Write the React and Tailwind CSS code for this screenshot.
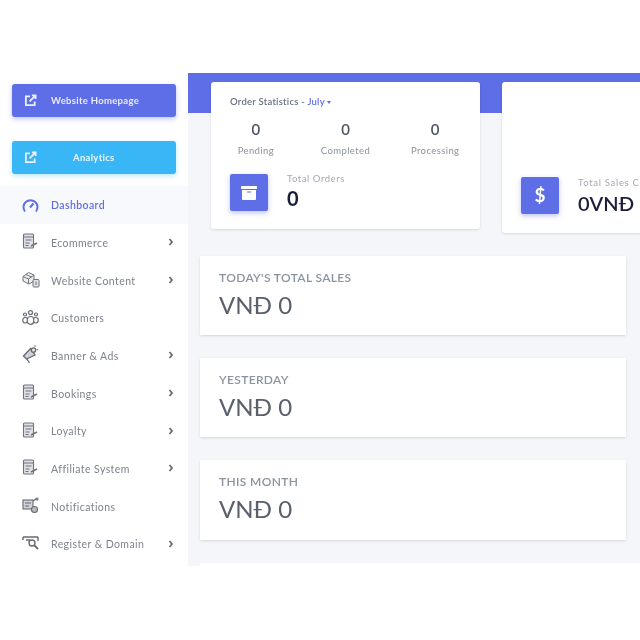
import React from "react";

const Doc = () => (
  <svg width="17" height="17" viewBox="0 0 17 17" fill="none" stroke="#6f747c" strokeWidth="1.1">
    <rect x="1.5" y="1" width="10" height="14" rx="1" fill="#dfe1e5" />
    <path d="M1.500 4h10M3.500 7h6M3.500 10h4M3.500 12.500h3" />
    <path d="M9 13l6-3" strokeWidth="1.600" />
  </svg>
);
const Box = () => (
  <svg width="18" height="17" viewBox="0 0 18 17" fill="none" stroke="#6f747c" strokeWidth="1">
    <path d="M1 5.500l5.500-4 5.500 2.500v6l-5 3-6-3z" fill="#eceef0" />
    <path d="M6.500 8v5M1 5.500l5.500 2.500 5.500-4M4 3.500l5.500 2.500" />
    <rect x="11" y="8.500" width="6" height="7.500" rx="1" fill="#dfe1e5" />
    <path d="M14 10.500v3.500" />
  </svg>
);
const People = () => (
  <svg width="17" height="15" viewBox="0 0 17 15" fill="none" stroke="#666b73" strokeWidth="1.200">
    <circle cx="8.500" cy="2.600" r="2" />
    <circle cx="3" cy="4.500" r="1.500" />
    <circle cx="14" cy="4.500" r="1.500" />
    <rect x="0.800" y="7.500" width="5" height="5.500" rx="2.400" />
    <rect x="11.200" y="7.500" width="5" height="5.500" rx="2.400" />
    <rect x="5.300" y="6.500" width="6.400" height="7.800" rx="3" fill="#fff" />
  </svg>
);
const Horn = () => (
  <svg width="16" height="19" viewBox="0 0 16 19" fill="none" stroke="#666b73" strokeWidth="1.300">
    <path d="M1.500 11l7-7.500 4.500 6.500-8.500 4z" fill="#cfd2d6" />
    <path d="M5 14l2.500 4M12.500 1.500l1-1M15 5l1-.5" />
    <circle cx="11.500" cy="5" r="2.200" fill="#e5e7eb" />
  </svg>
);
const Notify = () => (
  <svg width="17" height="17" viewBox="0 0 17 17" fill="none" stroke="#666b73" strokeWidth="1.100">
    <rect x="1" y="3" width="10" height="9" fill="#cfd2d6" />
    <path d="M3 6h6M3 9h4M11 4l3-2" />
    <circle cx="15" cy="2" r="1" />
    <circle cx="12.500" cy="12.500" r="3" fill="#b9bdc3" />
  </svg>
);
const Domain = () => (
  <svg width="18" height="16" viewBox="0 0 18 16" fill="none" stroke="#666b73" strokeWidth="1.400">
    <path d="M1 2h15M1 2v3M16 2v4M4 5h4" />
    <circle cx="10" cy="8" r="3" />
    <path d="M12.500 10.500L16 14" strokeWidth="1.800" />
  </svg>
);
const Ext = () => (
  <svg width="13" height="13" viewBox="0 0 14 14" fill="none" stroke="#eef0fd" strokeWidth="1.900">
    <path d="M6.500 2.500H2v9.500h9.500V8" />
    <path d="M6 8l6-6M8.500 1.500h4v4" />
  </svg>
);
const Gauge = () => (
  <svg width="17" height="15" viewBox="0 0 17 15" fill="none" stroke="#5e6ee6" strokeWidth="2">
    <path d="M3 13.500A7 7 0 1 1 14 13.500" />
    <path d="M8 9.500l3.500-4" />
  </svg>
);
const Chevron = () => (
  <svg width="6" height="8" viewBox="0 0 6 8" fill="none" stroke="#666b73" strokeWidth="1.800">
    <path d="M1.500 1l2.500 3-2.500 3" />
  </svg>
);

const menu = [
  ["Ecommerce", <Doc />, true],
  ["Website Content", <Box />, true],
  ["Customers", <People />, false],
  ["Banner & Ads", <Horn />, true],
  ["Bookings", <Doc />, true],
  ["Loyalty", <Doc />, true],
  ["Affiliate System", <Doc />, true],
  ["Notifications", <Notify />, false],
  ["Register & Domain", <Domain />, true],
];

const Stat = ({ label }) => (
  <div className="flex w-[90px] flex-col items-center">
    <span className="text-[15px] leading-[20px] font-semibold text-[#4b5563]">0</span>
    <span className="mt-[2px] text-[9.500px] leading-[20px] tracking-[0.4px] text-[#8b929c]">{label}</span>
  </div>
);

const Sales = ({ label, className = "h-[79px]" }) => (
  <div className={`flex w-[426px] flex-col bg-white px-[19px] pt-[13px] shadow-sm ${className}`}>
    <span className="text-[12px] leading-[18px] font-semibold tracking-[0.35px] text-[#8a949e]">{label}</span>
    <span className="mt-[3px] text-[24px] leading-[30px] font-normal text-[#59606b]">VNĐ 0</span>
  </div>
);

export default function App() {
  return (
    <div className="flex h-[640px] w-[640px] overflow-hidden bg-white pt-[73px] font-['Lato','Open_Sans',sans-serif] blur-[0.4px]">
      <aside className="h-[493px] w-[188px] shrink-0 pt-[11px]">
        <div className="flex flex-col gap-[24px] px-[12px]">
          <div className="flex h-[33px] items-center rounded-[3px] bg-[#5e6ee6] pl-[12px] shadow-[0_2px_5px_rgba(94,110,230,0.4)]">
            <Ext />
            <span className="mt-[1px] ml-[14px] text-[9.500px] font-bold tracking-[0.3px] text-[#e8ebfd]">Website Homepage</span>
          </div>
          <div className="flex h-[33px] items-center rounded-[3px] bg-[#38b6f5] pl-[12px] shadow-[0_2px_5px_rgba(56,182,245,0.35)]">
            <Ext />
            <span className="mt-[1px] ml-[36px] text-[9.500px] font-bold tracking-[0.3px] text-[#e8f6fe]">Analytics</span>
          </div>
        </div>
        <nav className="mt-[12px]">
          <div className="flex h-[38px] items-center bg-[#f8f9fc] pl-[22px]">
            <span className="flex w-[29px] items-center"><Gauge /></span>
            <span className="mt-[2px] text-[10.500px] font-semibold tracking-[0.4px] text-[#5e6ee6]">Dashboard</span>
          </div>
          {menu.map(([name, icon, arrow]) => (
            <div key={name} className="flex h-[37.700px] items-center pr-[14px] pl-[22px]">
              <span className="mb-[2px] flex w-[29px] items-center">{icon}</span>
              <span className="mt-[2px] flex-1 text-[10.500px] tracking-[0.42px] text-[#7d838c]">{name}</span>
              {arrow && <span className="mb-[1px] flex"><Chevron /></span>}
            </div>
          ))}
        </nav>
      </aside>

      <main className="h-[493px] flex-1 overflow-hidden bg-[#f4f6f9]">
        <div className="h-[40px] bg-[#5e6ee6]" />
        <div className="mt-[-31px] flex items-start pl-[23px]">
          <section className="h-[147px] w-[269px] shrink-0 rounded-[3px] bg-white px-[19px] pt-[12px] shadow-sm">
            <div className="text-[9.500px] leading-[16px] font-semibold tracking-[0.25px] text-[#6b7280]">
              Order Statistics - <span className="text-[#5e6ee6]">July</span>
              <span className="ml-[2px] inline-block border-x-[2.500px] border-t-[3px] border-x-transparent border-t-[#5e6ee6] align-middle" />
            </div>
            <div className="mt-[9px] ml-[-19px] flex w-[269px] justify-center">
              <Stat label="Pending" />
              <Stat label="Completed" />
              <Stat label="Processing" />
            </div>
            <div className="mt-[13px] flex">
              <div className="flex h-[37px] w-[38px] items-center justify-center rounded-[2px] bg-[#5e6ee6] shadow-[0_2px_5px_rgba(94,110,230,0.4)]">
                <svg width="16" height="14" viewBox="0 0 16 14" fill="#fff">
                  <rect x="0" y="0" width="16" height="3" rx="0.500" />
                  <path d="M1 4h14v9a1 1 0 0 1-1 1H2a1 1 0 0 1-1-1z" />
                  <rect x="6" y="5.500" width="4" height="1" fill="#5e6ee6" />
                </svg>
              </div>
              <div className="mt-[-1px] ml-[19px] flex flex-col">
                <span className="text-[9.500px] leading-[12px] tracking-[0.55px] text-[#a4aab2]">Total Orders</span>
                <span className="text-[20px] leading-[26px] font-bold text-[#1b1f3b]">0</span>
              </div>
            </div>
          </section>
          <section className="ml-[22px] flex h-[151px] w-[300px] shrink-0 items-end rounded-[3px] bg-white pb-[17px] pl-[19px] shadow-sm">
            <div className="flex items-start">
              <div className="flex h-[37px] w-[38px] items-center justify-center rounded-[2px] bg-[#5e6ee6] shadow-[0_2px_5px_rgba(94,110,230,0.4)]">
                <span className="text-[19px] font-bold text-white">$</span>
              </div>
              <div className="ml-[19px] flex flex-col">
                <span className="text-[9.500px] leading-[12px] tracking-[0.7px] whitespace-nowrap text-[#a4aab2]">Total Sales Count</span>
                <span className="mt-[1px] text-[20px] leading-[26px] font-semibold text-[#1b1f3b]">0VNĐ</span>
              </div>
            </div>
          </section>
        </div>
        <div className="mt-[23px] flex flex-col gap-[23px] pl-[12px]">
          <Sales label="TODAY'S TOTAL SALES" />
          <Sales label="YESTERDAY" />
          <Sales label="THIS MONTH" className="h-[80px]" />
          <div className="h-[60px] w-[440px] bg-white" />
        </div>
      </main>
    </div>
  );
}
